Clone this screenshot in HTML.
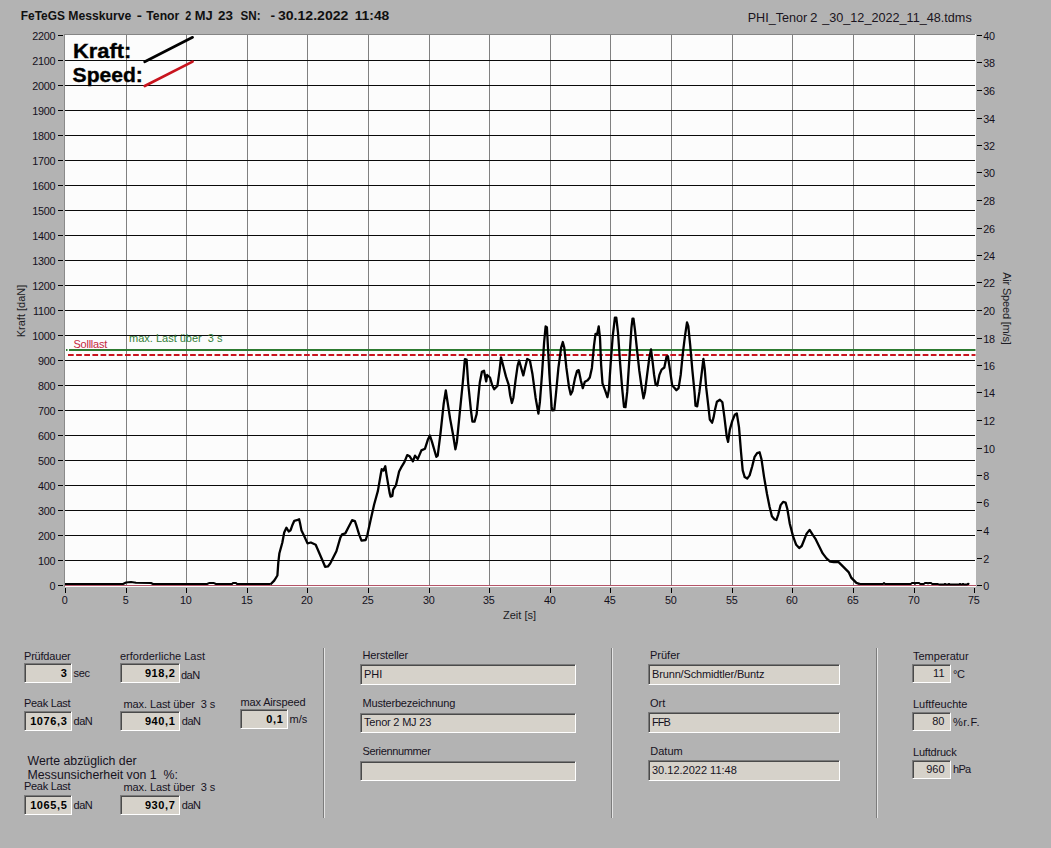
<!DOCTYPE html>
<html lang="de"><head><meta charset="utf-8"><title>FeTeGS Messkurve</title>
<style>
html,body{margin:0;padding:0}
body{width:1051px;height:848px;background:#b3b3b3;position:relative;overflow:hidden;font-family:"Liberation Sans", sans-serif;font-size:11px;color:#16121e}
.l{position:absolute;white-space:pre;line-height:13px;height:13px}
.b{position:absolute;box-sizing:border-box;background:#d6d2ca;border:1px solid;border-color:#7a7a7a #fff #fff #7a7a7a;box-shadow:inset 1px 1px 0 #4a4a4a;white-space:pre;line-height:13px}
.b span{position:absolute;top:3px}
.n span{right:3.6px;font-weight:bold;color:#000;letter-spacing:.6px}
.r span{right:5.5px;top:2px}
.t span{left:3px}
.sep{position:absolute;top:648px;height:170px;width:1px;background:#7c7c7c;box-shadow:1px 0 0 #e4e4e4}
.big{font-size:12.3px;line-height:14px;height:14px}

</style></head><body>
<svg width="1051" height="640" viewBox="0 0 1051 640" style="position:absolute;left:0;top:0" font-family='"Liberation Sans", sans-serif' font-size="11px">
<rect x="64" y="34" width="912" height="553" fill="#fcfcfc"/>
<rect x="64" y="34" width="1" height="553" fill="#8a8a8a"/>
<rect x="64" y="34" width="911" height="1" fill="#858585"/>
<path d="M126.5 35V586 M186.5 35V586 M247.5 35V586 M307.5 35V586 M368.5 35V586 M429.5 35V586 M489.5 35V586 M550.5 35V586 M610.5 35V586 M671.5 35V586 M732.5 35V586 M792.5 35V586 M853.5 35V586 M914.5 35V586" stroke="#808080" stroke-width="1" fill="none" shape-rendering="crispEdges"/>
<path d="M65 560.5H975 M65 535.5H975 M65 510.5H975 M65 485.5H975 M65 460.5H975 M65 435.5H975 M65 410.5H975 M65 385.5H975 M65 360.5H975 M65 335.5H975 M65 310.5H975 M65 285.5H975 M65 260.5H975 M65 235.5H975 M65 210.5H975 M65 185.5H975 M65 160.5H975 M65 135.5H975 M65 110.5H975 M65 85.5H975 M65 60.5H975" stroke="#0a0a0a" stroke-width="1" fill="none" shape-rendering="crispEdges"/>
<path d="M65 585.5H976" stroke="#b45468" stroke-width="1" fill="none" shape-rendering="crispEdges"/>
<text x="55.2" y="589.5" text-anchor="end" fill="#14101c" font-size="10.8px" letter-spacing="-0.25">0</text>
<text x="55.2" y="564.5" text-anchor="end" fill="#14101c" font-size="10.8px" letter-spacing="-0.25">100</text>
<text x="55.2" y="539.5" text-anchor="end" fill="#14101c" font-size="10.8px" letter-spacing="-0.25">200</text>
<text x="55.2" y="514.5" text-anchor="end" fill="#14101c" font-size="10.8px" letter-spacing="-0.25">300</text>
<text x="55.2" y="489.5" text-anchor="end" fill="#14101c" font-size="10.8px" letter-spacing="-0.25">400</text>
<text x="55.2" y="464.5" text-anchor="end" fill="#14101c" font-size="10.8px" letter-spacing="-0.25">500</text>
<text x="55.2" y="439.5" text-anchor="end" fill="#14101c" font-size="10.8px" letter-spacing="-0.25">600</text>
<text x="55.2" y="414.5" text-anchor="end" fill="#14101c" font-size="10.8px" letter-spacing="-0.25">700</text>
<text x="55.2" y="389.5" text-anchor="end" fill="#14101c" font-size="10.8px" letter-spacing="-0.25">800</text>
<text x="55.2" y="364.5" text-anchor="end" fill="#14101c" font-size="10.8px" letter-spacing="-0.25">900</text>
<text x="55.2" y="339.5" text-anchor="end" fill="#14101c" font-size="10.8px" letter-spacing="-0.25">1000</text>
<text x="55.2" y="314.5" text-anchor="end" fill="#14101c" font-size="10.8px" letter-spacing="-0.25">1100</text>
<text x="55.2" y="289.5" text-anchor="end" fill="#14101c" font-size="10.8px" letter-spacing="-0.25">1200</text>
<text x="55.2" y="264.5" text-anchor="end" fill="#14101c" font-size="10.8px" letter-spacing="-0.25">1300</text>
<text x="55.2" y="239.5" text-anchor="end" fill="#14101c" font-size="10.8px" letter-spacing="-0.25">1400</text>
<text x="55.2" y="214.5" text-anchor="end" fill="#14101c" font-size="10.8px" letter-spacing="-0.25">1500</text>
<text x="55.2" y="189.5" text-anchor="end" fill="#14101c" font-size="10.8px" letter-spacing="-0.25">1600</text>
<text x="55.2" y="164.5" text-anchor="end" fill="#14101c" font-size="10.8px" letter-spacing="-0.25">1700</text>
<text x="55.2" y="139.5" text-anchor="end" fill="#14101c" font-size="10.8px" letter-spacing="-0.25">1800</text>
<text x="55.2" y="114.5" text-anchor="end" fill="#14101c" font-size="10.8px" letter-spacing="-0.25">1900</text>
<text x="55.2" y="89.5" text-anchor="end" fill="#14101c" font-size="10.8px" letter-spacing="-0.25">2000</text>
<text x="55.2" y="64.5" text-anchor="end" fill="#14101c" font-size="10.8px" letter-spacing="-0.25">2100</text>
<text x="55.2" y="39.5" text-anchor="end" fill="#14101c" font-size="10.8px" letter-spacing="-0.25">2200</text>
<path d="M58 585.5H63 M58 560.5H63 M58 535.5H63 M58 510.5H63 M58 485.5H63 M58 460.5H63 M58 435.5H63 M58 410.5H63 M58 385.5H63 M58 360.5H63 M58 335.5H63 M58 310.5H63 M58 285.5H63 M58 260.5H63 M58 235.5H63 M58 210.5H63 M58 185.5H63 M58 160.5H63 M58 135.5H63 M58 110.5H63 M58 85.5H63 M58 60.5H63 M58 35.5H63" stroke="#000" stroke-width="1" fill="none" shape-rendering="crispEdges"/>
<text x="983.2" y="589.5" fill="#14101c" font-size="10.8px" letter-spacing="-0.25">0</text>
<text x="983.2" y="562.5" fill="#14101c" font-size="10.8px" letter-spacing="-0.25">2</text>
<text x="983.2" y="534.5" fill="#14101c" font-size="10.8px" letter-spacing="-0.25">4</text>
<text x="983.2" y="506.5" fill="#14101c" font-size="10.8px" letter-spacing="-0.25">6</text>
<text x="983.2" y="479.5" fill="#14101c" font-size="10.8px" letter-spacing="-0.25">8</text>
<text x="983.2" y="452.5" fill="#14101c" font-size="10.8px" letter-spacing="-0.25">10</text>
<text x="983.2" y="424.5" fill="#14101c" font-size="10.8px" letter-spacing="-0.25">12</text>
<text x="983.2" y="396.5" fill="#14101c" font-size="10.8px" letter-spacing="-0.25">14</text>
<text x="983.2" y="369.5" fill="#14101c" font-size="10.8px" letter-spacing="-0.25">16</text>
<text x="983.2" y="342.5" fill="#14101c" font-size="10.8px" letter-spacing="-0.25">18</text>
<text x="983.2" y="314.5" fill="#14101c" font-size="10.8px" letter-spacing="-0.25">20</text>
<text x="983.2" y="286.5" fill="#14101c" font-size="10.8px" letter-spacing="-0.25">22</text>
<text x="983.2" y="259.5" fill="#14101c" font-size="10.8px" letter-spacing="-0.25">24</text>
<text x="983.2" y="232.5" fill="#14101c" font-size="10.8px" letter-spacing="-0.25">26</text>
<text x="983.2" y="204.5" fill="#14101c" font-size="10.8px" letter-spacing="-0.25">28</text>
<text x="983.2" y="176.5" fill="#14101c" font-size="10.8px" letter-spacing="-0.25">30</text>
<text x="983.2" y="149.5" fill="#14101c" font-size="10.8px" letter-spacing="-0.25">32</text>
<text x="983.2" y="122.5" fill="#14101c" font-size="10.8px" letter-spacing="-0.25">34</text>
<text x="983.2" y="94.5" fill="#14101c" font-size="10.8px" letter-spacing="-0.25">36</text>
<text x="983.2" y="66.5" fill="#14101c" font-size="10.8px" letter-spacing="-0.25">38</text>
<text x="983.2" y="39.5" fill="#14101c" font-size="10.8px" letter-spacing="-0.25">40</text>
<path d="M977 585.5H982 M977 558.5H982 M977 530.5H982 M977 502.5H982 M977 475.5H982 M977 448.5H982 M977 420.5H982 M977 392.5H982 M977 365.5H982 M977 338.5H982 M977 310.5H982 M977 282.5H982 M977 255.5H982 M977 228.5H982 M977 200.5H982 M977 172.5H982 M977 145.5H982 M977 118.5H982 M977 90.5H982 M977 62.5H982 M977 35.5H982" stroke="#000" stroke-width="1" fill="none" shape-rendering="crispEdges"/>
<text x="64.7" y="604.3" text-anchor="middle" fill="#14101c" font-size="10.8px" letter-spacing="-0.25">0</text>
<text x="125.7" y="604.3" text-anchor="middle" fill="#14101c" font-size="10.8px" letter-spacing="-0.25">5</text>
<text x="185.7" y="604.3" text-anchor="middle" fill="#14101c" font-size="10.8px" letter-spacing="-0.25">10</text>
<text x="246.7" y="604.3" text-anchor="middle" fill="#14101c" font-size="10.8px" letter-spacing="-0.25">15</text>
<text x="306.7" y="604.3" text-anchor="middle" fill="#14101c" font-size="10.8px" letter-spacing="-0.25">20</text>
<text x="367.7" y="604.3" text-anchor="middle" fill="#14101c" font-size="10.8px" letter-spacing="-0.25">25</text>
<text x="428.7" y="604.3" text-anchor="middle" fill="#14101c" font-size="10.8px" letter-spacing="-0.25">30</text>
<text x="488.7" y="604.3" text-anchor="middle" fill="#14101c" font-size="10.8px" letter-spacing="-0.25">35</text>
<text x="549.7" y="604.3" text-anchor="middle" fill="#14101c" font-size="10.8px" letter-spacing="-0.25">40</text>
<text x="609.7" y="604.3" text-anchor="middle" fill="#14101c" font-size="10.8px" letter-spacing="-0.25">45</text>
<text x="670.7" y="604.3" text-anchor="middle" fill="#14101c" font-size="10.8px" letter-spacing="-0.25">50</text>
<text x="731.7" y="604.3" text-anchor="middle" fill="#14101c" font-size="10.8px" letter-spacing="-0.25">55</text>
<text x="791.7" y="604.3" text-anchor="middle" fill="#14101c" font-size="10.8px" letter-spacing="-0.25">60</text>
<text x="852.7" y="604.3" text-anchor="middle" fill="#14101c" font-size="10.8px" letter-spacing="-0.25">65</text>
<text x="913.7" y="604.3" text-anchor="middle" fill="#14101c" font-size="10.8px" letter-spacing="-0.25">70</text>
<text x="973.7" y="604.3" text-anchor="middle" fill="#14101c" font-size="10.8px" letter-spacing="-0.25">75</text>
<path d="M65.5 588V593 M126.5 588V593 M186.5 588V593 M247.5 588V593 M307.5 588V593 M368.5 588V593 M429.5 588V593 M489.5 588V593 M550.5 588V593 M610.5 588V593 M671.5 588V593 M732.5 588V593 M792.5 588V593 M853.5 588V593 M914.5 588V593 M974.5 588V593" stroke="#000" stroke-width="1" fill="none" shape-rendering="crispEdges"/>
<text x="519.5" y="619" text-anchor="middle" fill="#1c1c24">Zeit [s]</text>
<text transform="translate(25,311) rotate(-90)" text-anchor="middle" fill="#1c1c24">Kraft [daN]</text>
<text transform="translate(1002.5,308.4) rotate(90)" text-anchor="middle" fill="#1c1c24" letter-spacing="-0.18">Air Speed [m/s]</text>
<text x="20.80" y="20" font-size="13.2px" font-weight="bold" fill="#101010" textLength="44.08" lengthAdjust="spacingAndGlyphs">FeTeGS</text>
<text x="68.28" y="20" font-size="13.2px" font-weight="bold" fill="#101010" textLength="63.00" lengthAdjust="spacingAndGlyphs">Messkurve</text>
<text x="136.80" y="20" font-size="13.2px" font-weight="bold" fill="#101010" textLength="5.18" lengthAdjust="spacingAndGlyphs">-</text>
<text x="146.30" y="20" font-size="13.2px" font-weight="bold" fill="#101010" textLength="32.98" lengthAdjust="spacingAndGlyphs">Tenor</text>
<text x="185.30" y="20" font-size="13.2px" font-weight="bold" fill="#101010" textLength="5.98" lengthAdjust="spacingAndGlyphs">2</text>
<text x="194.82" y="20" font-size="13.2px" font-weight="bold" fill="#101010" textLength="17.90" lengthAdjust="spacingAndGlyphs">MJ</text>
<text x="218.10" y="20" font-size="13.2px" font-weight="bold" fill="#101010" textLength="14.88" lengthAdjust="spacingAndGlyphs">23</text>
<text x="240.62" y="20" font-size="13.2px" font-weight="bold" fill="#101010" textLength="20.01" lengthAdjust="spacingAndGlyphs">SN:</text>
<text x="270.40" y="20" font-size="13.2px" font-weight="bold" fill="#101010" textLength="4.63" lengthAdjust="spacingAndGlyphs">-</text>
<text x="277.93" y="20" font-size="13.2px" font-weight="bold" fill="#101010" textLength="70.48" lengthAdjust="spacingAndGlyphs">30.12.2022</text>
<text x="354.65" y="20" font-size="13.2px" font-weight="bold" fill="#101010" textLength="34.67" lengthAdjust="spacingAndGlyphs">11:48</text>
<text x="747.70" y="22" font-size="12.6px" font-weight="normal" fill="#1a1420" textLength="59.50" lengthAdjust="spacingAndGlyphs">PHI_Tenor</text>
<text x="810.13" y="22" font-size="12.6px" font-weight="normal" fill="#1a1420" textLength="7.48" lengthAdjust="spacingAndGlyphs">2</text>
<text x="822.20" y="22" font-size="12.6px" font-weight="normal" fill="#1a1420" textLength="149.54" lengthAdjust="spacingAndGlyphs">_30_12_2022_11_48.tdms</text>
<path d="M66 350H67.5M69 350H975.5" stroke="#2c7a30" stroke-width="2" fill="none"/>
<path d="M68 355H975.5" stroke="#c8141e" stroke-width="2" stroke-dasharray="5.7 2.44" fill="none"/>
<text x="73.5" y="347.5" fill="#c42840" letter-spacing="-0.25">Solllast</text>
<text x="129" y="342" fill="#348038" xml:space="preserve">max. Last über  3 s</text>
<polyline points="65.0,584.0 123.0,584.0 126.0,582.5 131.0,582.0 136.0,582.8 151.0,583.0 153.0,584.0 207.0,584.0 209.0,583.1 214.0,583.1 216.0,584.0 232.0,584.0 233.0,583.1 236.0,583.1 237.0,584.0 270.4,584.0" fill="none" stroke="#000" stroke-width="2" stroke-linejoin="round" stroke-linecap="butt"/>
<polyline points="270.4,584.5 274.2,580.6 277.4,575.5 278.3,562.6 279.4,553.2 282.3,542.8 284.2,532.5 286.4,527.7 288.7,531.5 290.6,530.2 292.1,525.8 294.3,520.8 296.8,520.2 299.1,519.2 300.0,523.0 301.5,530.6 304.3,536.2 307.5,543.4 310.9,542.5 315.7,544.7 318.5,551.3 324.2,564.5 325.1,566.8 327.9,566.4 330.2,563.6 334.5,555.1 336.4,551.3 340.2,538.1 342.1,534.3 345.3,533.4 348.7,526.8 352.1,520.2 354.9,521.1 356.2,524.9 359.1,534.3 361.5,540.6 365.7,540.0 367.5,534.3 370.4,521.1 374.2,504.2 377.9,490.9 380.8,474.0 381.7,469.2 383.5,470.5 385.3,466.3 386.4,473.8 389.6,492.9 390.6,496.7 392.3,496.0 393.2,489.7 395.9,485.4 399.1,471.6 401.2,467.4 404.4,462.1 407.2,455.1 409.7,456.3 412.9,461.4 415.0,455.7 417.8,458.9 421.4,450.4 425.0,448.7 427.8,439.8 429.9,435.5 432.0,441.9 436.3,456.8 437.7,455.7 440.5,433.4 443.7,403.7 445.8,390.5 447.5,401.6 450.1,418.6 453.2,435.5 455.4,449.3 456.9,441.9 459.6,414.3 462.8,382.5 464.9,359.1 466.6,359.5 468.1,382.5 470.9,410.1 472.4,421.7 474.5,421.7 476.6,414.3 479.8,382.5 481.9,371.8 484.0,370.8 486.2,381.4 487.2,375.0 490.0,377.5 492.1,384.9 494.2,389.2 497.4,386.0 499.6,370.1 501.0,357.3 502.7,363.7 505.9,376.4 508.7,384.9 510.2,395.5 511.9,403.0 513.4,397.7 515.5,380.7 517.6,365.8 519.1,360.5 521.2,367.9 523.3,375.4 525.0,367.9 527.2,359.0 529.9,360.5 532.5,374.3 535.6,397.7 538.4,413.6 539.9,401.9 542.0,374.3 544.1,342.5 545.6,326.5 546.9,327.2 547.7,342.5 549.4,374.3 551.6,406.2 552.2,410.4 554.3,410.0 555.8,395.5 558.4,367.9 561.1,347.8 562.8,342.0 564.3,347.8 566.4,367.9 569.0,387.0 570.7,394.5 572.4,391.3 574.9,378.6 577.0,371.1 578.7,370.1 580.9,380.7 582.8,388.1 584.9,381.7 587.7,380.3 589.8,377.5 591.9,367.9 594.0,345.6 595.5,334.0 597.2,334.0 598.7,326.5 600.0,337.8 601.1,364.3 602.5,383.4 605.3,390.8 607.4,397.2 608.9,389.8 610.6,364.3 612.7,336.7 614.9,317.6 616.3,317.6 618.0,332.5 620.2,364.3 622.3,389.8 624.0,406.8 625.5,407.2 627.2,391.9 629.3,360.1 631.4,328.2 632.5,318.7 633.5,318.7 635.0,330.3 637.2,351.6 639.3,370.7 641.4,385.5 643.5,398.3 645.0,391.9 647.1,374.9 649.3,358.0 651.0,349.4 652.4,360.1 654.1,374.9 655.6,384.5 657.3,385.5 659.4,374.9 661.6,369.6 664.3,367.5 666.5,356.9 667.9,356.2 670.1,370.7 672.2,385.5 674.3,387.7 676.4,390.2 678.6,388.1 680.7,374.9 682.8,353.7 684.9,336.7 687.0,322.3 688.3,326.1 690.2,345.2 692.4,370.7 694.5,391.9 695.5,405.7 697.2,406.3 699.4,391.9 701.5,374.9 703.4,359.0 704.7,368.6 706.2,387.7 708.3,405.7 709.8,419.5 712.1,422.7 713.6,417.4 715.0,409.7 716.9,401.8 719.9,399.8 722.4,402.3 724.4,417.2 726.8,437.0 728.1,441.9 729.8,429.6 732.3,420.9 734.8,414.7 736.8,413.4 739.0,427.1 741.0,451.9 742.7,470.4 744.7,477.1 747.2,478.6 749.6,475.4 752.1,466.7 754.6,456.8 757.1,453.1 759.6,452.3 761.5,459.3 764.0,476.6 767.0,494.0 769.5,506.4 771.9,516.3 774.4,519.2 776.4,520.0 778.1,515.0 780.6,505.1 783.1,501.9 785.6,502.6 787.3,508.8 789.8,523.7 793.0,536.1 796.2,544.8 799.2,548.0 801.7,546.0 804.2,539.8 806.6,533.6 809.6,529.9 812.8,534.9 815.3,538.6 819.0,546.0 822.7,553.4 826.5,558.4 830.2,561.6 833.9,562.1 838.6,562.1 842.9,566.4 848.6,572.1 851.4,577.9 856.4,582.9 860.0,584.2" fill="none" stroke="#000" stroke-width="2.3" stroke-linejoin="round" stroke-linecap="butt"/>
<polyline points="860.0,583.9 883.0,583.9 884.0,583.0 885.0,583.9 911.0,583.9 912.0,582.9 914.0,582.9 915.0,583.7 916.0,582.9 919.0,582.9 920.0,583.9 924.0,583.9 925.0,582.9 927.0,582.9 928.0,583.5 929.0,582.9 931.0,582.9 932.0,583.9 938.0,584.1 940.0,584.6 944.0,584.6 945.0,583.9 946.0,584.6 948.0,584.6 949.0,583.9 950.0,584.6 959.0,584.6 960.0,583.9 961.0,584.6 962.0,584.6 963.0,583.9 964.0,584.6 967.0,584.6 968.0,583.7 969.3,584.3" fill="none" stroke="#000" stroke-width="2" stroke-linejoin="round" stroke-linecap="butt"/>
<text x="72.93" y="57.8" font-size="20.5px" font-weight="bold" fill="#000" textLength="58.35" lengthAdjust="spacingAndGlyphs" stroke="#000" stroke-width="0.35">Kraft:</text>
<text x="72.57" y="81.8" font-size="20.5px" font-weight="bold" fill="#000" textLength="70.33" lengthAdjust="spacingAndGlyphs" stroke="#000" stroke-width="0.35">Speed:</text>
<path d="M144.7 61.8L192.6 37.3" stroke="#000" stroke-width="2.7" fill="none" stroke-linecap="round"/>
<path d="M144.7 86L192.6 61.6" stroke="#c8141e" stroke-width="2.7" fill="none" stroke-linecap="round"/>
</svg>
<div class="l" style="left:24px;top:649.5px;letter-spacing:-0.2px">Prüfdauer</div>
<div class="b n" style="left:24px;top:663px;width:48px;height:20px"><span>3</span></div>
<div class="l" style="left:73.6px;top:667.0px;letter-spacing:-0.4px">sec</div>
<div class="l" style="left:120px;top:649.5px">erforderliche Last</div>
<div class="b n" style="left:120px;top:663px;width:60px;height:20px"><span>918,2</span></div>
<div class="l" style="left:181px;top:669.0px;letter-spacing:-0.5px">daN</div>
<div class="l" style="left:24px;top:696.5px;letter-spacing:-0.3px">Peak Last</div>
<div class="b n" style="left:24px;top:711px;width:48px;height:20px"><span>1076,3</span></div>
<div class="l" style="left:73.6px;top:715.0px;letter-spacing:-0.5px">daN</div>
<div class="l" style="left:123.5px;top:697.5px;letter-spacing:-0.1px">max. Last über  3 s</div>
<div class="b n" style="left:120px;top:711px;width:60px;height:20px"><span>940,1</span></div>
<div class="l" style="left:181.8px;top:715.0px;letter-spacing:-0.5px">daN</div>
<div class="l" style="left:240.5px;top:695.5px;letter-spacing:-0.15px">max Airspeed</div>
<div class="b n" style="left:240px;top:709px;width:48px;height:20px"><span>0,1</span></div>
<div class="l" style="left:289.5px;top:712.5px">m/s</div>
<div class="l big" style="left:27.5px;top:753.5px">Werte abzüglich der</div>
<div class="l big" style="left:27.5px;top:767.5px">Messunsicherheit von 1  %:</div>
<div class="l" style="left:24px;top:779.5px;letter-spacing:-0.3px">Peak Last</div>
<div class="b n" style="left:24px;top:795px;width:48px;height:20px"><span>1065,5</span></div>
<div class="l" style="left:73.6px;top:798.5px;letter-spacing:-0.5px">daN</div>
<div class="l" style="left:123.5px;top:781.0px;letter-spacing:-0.1px">max. Last über  3 s</div>
<div class="b n" style="left:120px;top:795px;width:60px;height:20px"><span>930,7</span></div>
<div class="l" style="left:181.8px;top:798.5px;letter-spacing:-0.5px">daN</div>
<div class="sep" style="left:323px"></div>
<div class="sep" style="left:611px"></div>
<div class="sep" style="left:876px"></div>
<div class="l" style="left:362.5px;top:648.5px;letter-spacing:-0.15px">Hersteller</div>
<div class="b t" style="left:360px;top:664px;width:216px;height:21px"><span>PHI</span></div>
<div class="l" style="left:362.5px;top:696.5px;letter-spacing:-0.2px">Musterbezeichnung</div>
<div class="b t" style="left:360px;top:713px;width:216px;height:20px"><span style="top:2px;letter-spacing:-0.2px">Tenor 2 MJ 23</span></div>
<div class="l" style="left:362.5px;top:744.8px;letter-spacing:-0.35px">Seriennummer</div>
<div class="b t" style="left:360px;top:761px;width:216px;height:20px"><span></span></div>
<div class="l" style="left:650px;top:648.5px">Prüfer</div>
<div class="b t" style="left:648px;top:664px;width:192px;height:21px"><span style="letter-spacing:-0.15px">Brunn/Schmidtler/Buntz</span></div>
<div class="l" style="left:650px;top:696.5px">Ort</div>
<div class="b t" style="left:648px;top:712px;width:192px;height:21px"><span style="letter-spacing:-1px">FFB</span></div>
<div class="l" style="left:650.3px;top:744.7px">Datum</div>
<div class="b t" style="left:648px;top:760px;width:192px;height:21px"><span>30.12.2022 11:48</span></div>
<div class="l" style="left:913px;top:649.5px">Temperatur</div>
<div class="b r" style="left:912px;top:664px;width:39px;height:19px"><span>11</span></div>
<div class="l" style="left:953px;top:668.0px;letter-spacing:-0.5px">°C</div>
<div class="l" style="left:913px;top:697.5px">Luftfeuchte</div>
<div class="b r" style="left:912px;top:712px;width:39px;height:19px"><span>80</span></div>
<div class="l" style="left:953px;top:715.5px;letter-spacing:0.5px">%r.F.</div>
<div class="l" style="left:913px;top:745.5px;letter-spacing:-0.2px">Luftdruck</div>
<div class="b r" style="left:912px;top:760px;width:39px;height:19px"><span>960</span></div>
<div class="l" style="left:953px;top:763.0px;letter-spacing:-0.7px">hPa</div>
</body></html>
